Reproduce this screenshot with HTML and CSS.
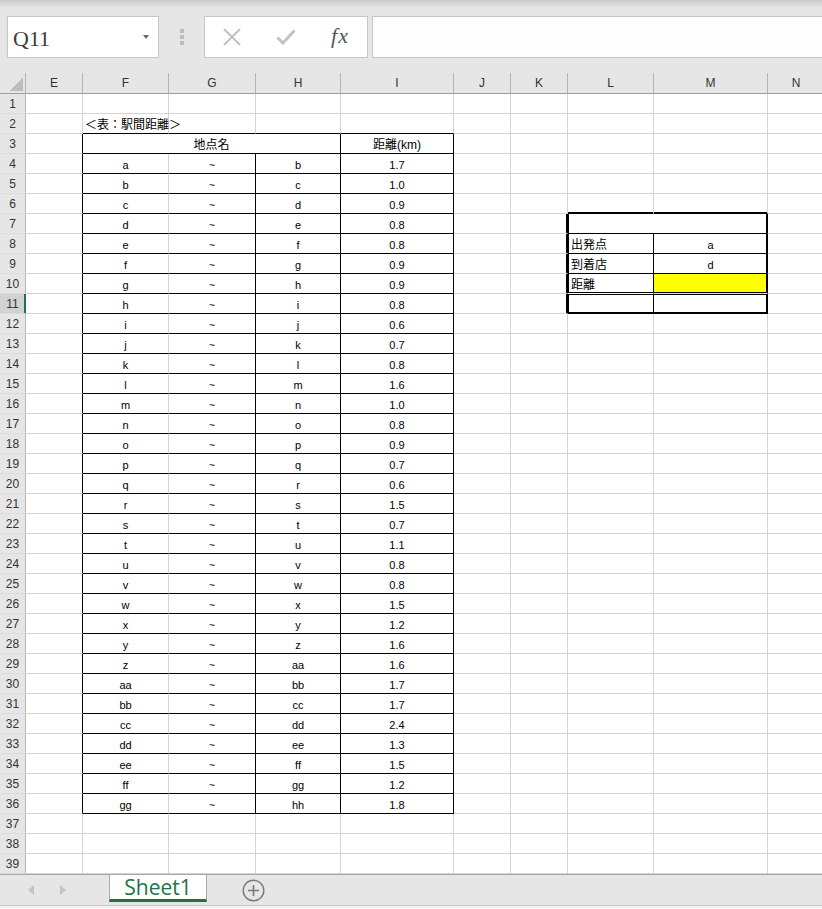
FILE: index.html
```html
<!DOCTYPE html>
<html lang="ja">
<head>
	<meta charset="UTF-8">
	<title>Book1 - Excel</title>
	<link rel="stylesheet" href="styles.css">
</head>
<body>
	<!-- 数式バー -->
	<div id="formulabar">
		<div class="namebox"><span>Q11</span><i class="caret"></i></div>
		<div class="grip"><i></i><i></i><i></i></div>
		<div class="fbuttons">
			<span>
				<svg width="18" height="18" viewBox="0 0 18 18"><path d="M1 1 L17 17 M17 1 L1 17" stroke="#c2c2c2" stroke-width="2" fill="none"/></svg>
			</span>
			<span>
				<svg width="20" height="16" viewBox="0 0 20 16"><path d="M1.5 8.5 L7 14 L18.5 1.5" stroke="#c2c2c2" stroke-width="3" fill="none"/></svg>
			</span>
			<span class="fx">fx</span>
		</div>
		<div class="finput"></div>
	</div>

	<!-- シート本体（セルはスクリプトで生成） -->
	<div id="sheet"></div>

	<!-- シート見出し -->
	<div id="tabbar">
		<div class="tabnav"><i class="prev"></i><i class="next"></i></div>
		<div class="tab">Sheet1</div>
		<div class="addsheet">
			<svg width="23" height="23" viewBox="0 0 23 23">
				<circle cx="11.5" cy="11.5" r="10.3" stroke="#7a7a7a" stroke-width="1.4" fill="none"/>
				<path d="M11.5 6 V17 M6 11.5 H17" stroke="#7a7a7a" stroke-width="1.6"/>
			</svg>
		</div>
	</div>
	<div id="status"></div>

	<script type="text/javascript">
		window.onload = function() {
			var cols = ['E', 'F', 'G', 'H', 'I', 'J', 'K', 'L', 'M', 'N'];
			var names = 'a b c d e f g h i j k l m n o p q r s t u v w x y z aa bb cc dd ee ff gg hh'.split(' ');
			var dist = ['1.7', '1.0', '0.9', '0.8', '0.8', '0.9', '0.9', '0.8', '0.6', '0.7', '0.8',
				'1.6', '1.0', '0.8', '0.9', '0.7', '0.6', '1.5', '0.7', '1.1', '0.8', '0.8',
				'1.5', '1.2', '1.6', '1.6', '1.7', '1.7', '2.4', '1.3', '1.5', '1.2', '1.8'];
			// 右側の入力表
			var box = {
				8: ['出発点', 'a'],
				9: ['到着店', 'd'],
				10: ['距離', ''],
				11: ['', '']
			};
			var sheet = document.getElementById('sheet');

			function add(cls, text) {
				var d = document.createElement('div');
				d.className = 'cell ' + cls;
				if (text) d.textContent = text;
				sheet.appendChild(d);
			}

			// 列見出し
			add('corner');
			for (var i = 0; i < cols.length; i++) {
				add('ch', cols[i]);
			}

			for (var r = 1; r <= 39; r++) {
				add('rh' + (r == 11 ? ' sel' : ''), String(r));
				for (var c = 0; c < cols.length; c++) {
					var col = cols[c];
					var cls = ['c'];
					var txt = '';

					// 結合セルの分は飛ばす
					if (r == 3 && (col == 'G' || col == 'H')) continue;
					if (r == 7 && col == 'M') continue;

					// 駅間距離の表
					if (col == 'E' && r >= 3 && r <= 36) cls.push('rb');
					if (r == 2 && 'FGHI'.indexOf(col) >= 0) cls.push('bb');
					if (r == 2 && col == 'F') {
						cls.push('left', 'jp');
						txt = '＜表：駅間距離＞';
					}
					if (r == 3 && col == 'F') {
						cls.push('span3', 'rb', 'bb', 'jp');
						txt = '地点名';
					}
					if (r == 3 && col == 'I') {
						cls.push('rb', 'bb', 'jp');
						txt = '距離(km)';
					}
					if (r >= 4 && r <= 36) {
						var n = r - 4;
						if (col == 'F') { cls.push('bb'); txt = names[n]; }
						if (col == 'G') { cls.push('rb', 'bb'); txt = '~'; }
						if (col == 'H') { cls.push('rb', 'bb'); txt = names[n + 1]; }
						if (col == 'I') { cls.push('rb', 'bb'); txt = dist[n]; }
					}

					// 入力表（太枠）
					if (r == 6 && (col == 'L' || col == 'M')) cls.push('box-above');
					if (r >= 7 && r <= 11 && col == 'K') cls.push('box-left-of');
					if (r == 7 && col == 'L') cls.push('span2', 'box-title');
					if (r >= 8 && r <= 11 && (col == 'L' || col == 'M')) {
						if (col == 'L') {
							cls.push('box-key', 'left', 'jp');
							txt = box[r][0];
						} else {
							cls.push('box-val');
							txt = box[r][1];
						}
						if (r == 10) cls.push('box-dbl');
						if (r == 11) cls.push('box-end');
					}

					add(cls.join(' '), txt);
				}
			}
		}
	</script>
</body>
</html>
```

FILE: styles.css
```css
*{
	margin: 0;
	padding: 0;
}
html, body {
	width: 822px;
	height: 909px;
	overflow: hidden;
}
body {
	background: #fff;
	font-family: "Liberation Sans", "Noto Sans CJK JP", sans-serif;
	color: #000;
}
i {
	display: block;
}

/* 数式バー */
#formulabar {
	height: 73px;
	box-sizing: border-box;
	padding-top: 16px;
	display: flex;
	align-items: flex-start;
	background: linear-gradient(#c9c9c9, #e6e6e6 8px);
}
.namebox {
	margin-left: 7px;
	width: 152px;
	height: 42px;
	box-sizing: border-box;
	border: 1px solid #c6c6c6;
	background: #fff;
	display: flex;
	align-items: center;
	padding: 4px 0 0 5px;
	font: 22px "Liberation Serif", serif;
	color: #3c3c3c;
}
.caret {
	margin: -4px 9px 0 auto;
	width: 0;
	height: 0;
	border-left: 3px solid transparent;
	border-right: 3px solid transparent;
	border-top: 4px solid #6a6a6a;
}
.grip {
	width: 45px;
	height: 42px;
	display: flex;
	flex-direction: column;
	align-items: center;
	justify-content: center;
	gap: 2px;
}
.grip i {
	width: 4px;
	height: 4px;
	background: #bdbdbd;
}
.fbuttons {
	width: 164px;
	height: 42px;
	box-sizing: border-box;
	border: 1px solid #c6c6c6;
	background: #fff;
	display: flex;
}
.fbuttons span {
	width: 54px;
	display: flex;
	align-items: center;
	justify-content: center;
}
.fbuttons .fx {
	font: italic 22px "Liberation Serif", serif;
	color: #555;
	letter-spacing: 1px;
	padding-bottom: 3px;
}
.finput {
	flex: 1;
	margin-left: 4px;
	height: 42px;
	box-sizing: border-box;
	border: 1px solid #c6c6c6;
	border-right: none;
	background: #fdfdfd;
}

/* シート */
#sheet {
	display: grid;
	grid-template-columns: 26px 57px 86px 87px 85px 113px 57px 57px 86px 114px 57px;
	grid-template-rows: 21px;
	grid-auto-rows: 20px;
	width: 825px;
}
.cell {
	box-sizing: border-box;
	border-right: 1px solid #d4d4d4;
	border-bottom: 1px solid #d4d4d4;
	display: flex;
	justify-content: center;
	white-space: nowrap;
	min-width: 0;
}
.corner {
	background: #e6e6e6;
	border-right-color: #b4b4b4;
	border-bottom-color: #9e9e9e;
}
.corner::after {
	content: '';
	width: 13px;
	height: 14px;
	margin: auto 2px 2px auto;
	background: linear-gradient(to top left, #bdbdbd 50%, transparent 50%);
}
.ch {
	background: #e6e6e6;
	border-right-color: #b4b4b4;
	border-bottom-color: #9e9e9e;
	align-items: center;
	font-size: 12px;
	color: #333;
}
.rh {
	background: #e6e6e6;
	border-right-color: #bababa;
	border-bottom-color: #dcdcdc;
	align-items: center;
	font-size: 12px;
	color: #333;
}
.rh.sel {
	background: #d2d2d2;
	border-right-color: #217346;
	box-shadow: inset -1px 0 #217346;
}
.c {
	align-items: flex-end;
	padding-bottom: 1px;
	font-size: 11px;
	line-height: 14px;
}
.c.left {
	justify-content: flex-start;
	padding-left: 2px;
}
.c.jp {
	font-size: 12px;
}
.span2 {
	grid-column: span 2;
}
.span3 {
	grid-column: span 3;
}

/* 細い罫線 */
.c.rb {
	border-right-color: #000;
}
.c.bb {
	border-bottom-color: #000;
}

/* 入力表の太枠 */
.c.box-above {
	border-bottom-color: #000;
	box-shadow: inset 0 -1px #000;
}
.c.box-left-of {
	border-right-color: #000;
	box-shadow: inset -1px 0 #000;
}
.c.box-title {
	border-right-color: #000;
	border-bottom-color: #000;
	box-shadow: inset 1px 0 #000, inset -1px 0 #000;
}
.c.box-key {
	border-right-color: #000;
	border-bottom-color: #000;
	box-shadow: inset 1px 0 #000;
	padding-left: 3px;
}
.c.box-val {
	border-right-color: #000;
	border-bottom-color: #000;
	box-shadow: inset -1px 0 #000;
}
.c.box-key.box-dbl {
	border-bottom-color: #fff;
	box-shadow: inset 1px 0 #000, inset 0 -1px #000;
}
.c.box-val.box-dbl {
	background: #ffff00;
	border-bottom-color: #ffff00;
	box-shadow: inset -1px 0 #000, inset 0 -1px #000;
}
.c.box-key.box-end {
	box-shadow: inset 1px 0 #000, inset 0 1px #000, inset 0 -1px #000;
}
.c.box-val.box-end {
	box-shadow: inset -1px 0 #000, inset 0 1px #000, inset 0 -1px #000;
}

/* シート見出し */
#tabbar {
	height: 32px;
	box-sizing: border-box;
	border-top: 1px solid #a6a6a6;
	border-bottom: 1px solid #c8c8c8;
	background: #e6e6e6;
	display: flex;
	align-items: flex-start;
}
.tabnav {
	width: 109px;
	height: 30px;
	display: flex;
	align-items: center;
}
.tabnav i {
	width: 0;
	height: 0;
	border-top: 5.5px solid transparent;
	border-bottom: 5.5px solid transparent;
}
.tabnav .prev {
	margin-left: 28px;
	border-right: 6px solid #c4c4c4;
}
.tabnav .next {
	margin-left: 26px;
	border-left: 6px solid #c4c4c4;
}
.tab {
	width: 98px;
	height: 27px;
	box-sizing: border-box;
	border-left: 1px solid #ababab;
	border-right: 1px solid #ababab;
	border-bottom: 3px solid #217346;
	background: #fff;
	color: #217346;
	font: 21px/24px "Open Sans", sans-serif;
	text-align: center;
}
.addsheet {
	margin: 4px 0 0 35px;
	width: 23px;
	height: 23px;
}
#status {
	height: 4px;
	background: #f3f3f3;
}
```
